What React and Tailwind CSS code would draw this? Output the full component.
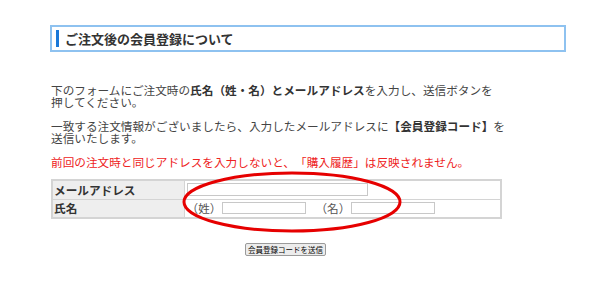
export default function App() {
  return (
    <div className="relative w-[600px] h-[300px] overflow-hidden bg-white text-[#444] [text-spacing-trim:space-all] font-['Noto_Sans_CJK_JP','Noto_Sans',sans-serif]">
      <div className="pt-[25px] pl-[50px]">
        <div className="w-[516px] h-[27px] border-2 border-[#8ec2f0] flex items-center pl-[4px]">
          <span className="w-[3px] h-[17px] bg-[#1a78d8]" />
          <h2 className="ml-[6px] text-[13px] font-bold text-[#333] leading-none">ご注文後の会員登録について</h2>
        </div>

        <div className="mt-[32px] ml-[1px] text-[11.65px] leading-[12px]">
          <p>
            下のフォームにご注文時の<b className="text-[#333]">氏名（姓・名）とメールアドレス</b>を入力し、送信ボタンを<br />
            押してください。
          </p>
          <p className="mt-[12px]">
            一致する注文情報がございましたら、入力したメールアドレスに<b className="text-[#333]">【会員登録コード】</b>を<br />
            送信いたします。
          </p>
          <p className="mt-[12px] text-[#ee2222]">前回の注文時と同じアドレスを入力しないと、「購入履歴」は反映されません。</p>
        </div>

        <table className="mt-[11px] ml-[1px] w-[451px] border-collapse border-2 border-[#d4d4d4] text-[11.65px]">
          <tbody>
            <tr className="h-[19px]">
              <th className="w-[132px] bg-[#eeeeee] border border-[#d4d4d4] text-left pl-[1px] font-bold text-[#333] leading-none">メールアドレス</th>
              <td className="border border-[#d4d4d4] pl-[2px]">
                <div className="w-[181px] h-[13px] border border-[#c8c8c8]" />
              </td>
            </tr>
            <tr className="h-[19px]">
              <th className="bg-[#eeeeee] border border-[#d4d4d4] text-left pl-[1px] font-bold text-[#333] leading-none">氏名</th>
              <td className="border border-[#d4d4d4] pl-[2px]">
                <div className="flex items-center leading-none text-[#555]">
                  <span>（姓）</span>
                  <div className="ml-[1px] w-[84px] h-[12px] border border-[#c8c8c8]" />
                  <span className="ml-[9px]">（名）</span>
                  <div className="ml-[1px] w-[84px] h-[12px] border border-[#c8c8c8]" />
                </div>
              </td>
            </tr>
          </tbody>
        </table>

        <div className="mt-[24px] flex pl-[195px]">
          <button className="h-[13px] px-[2px] border border-[#9a9a9a] rounded-[2px] bg-[#ececec] text-[7.5px] leading-none text-black">
            会員登録コードを送信
          </button>
        </div>
      </div>

      <svg className="absolute left-0 top-0 pointer-events-none" width="600" height="300">
        <ellipse cx="292" cy="202" rx="108" ry="29" fill="none" stroke="#e60000" strokeWidth="3" />
      </svg>
    </div>
  );
}
